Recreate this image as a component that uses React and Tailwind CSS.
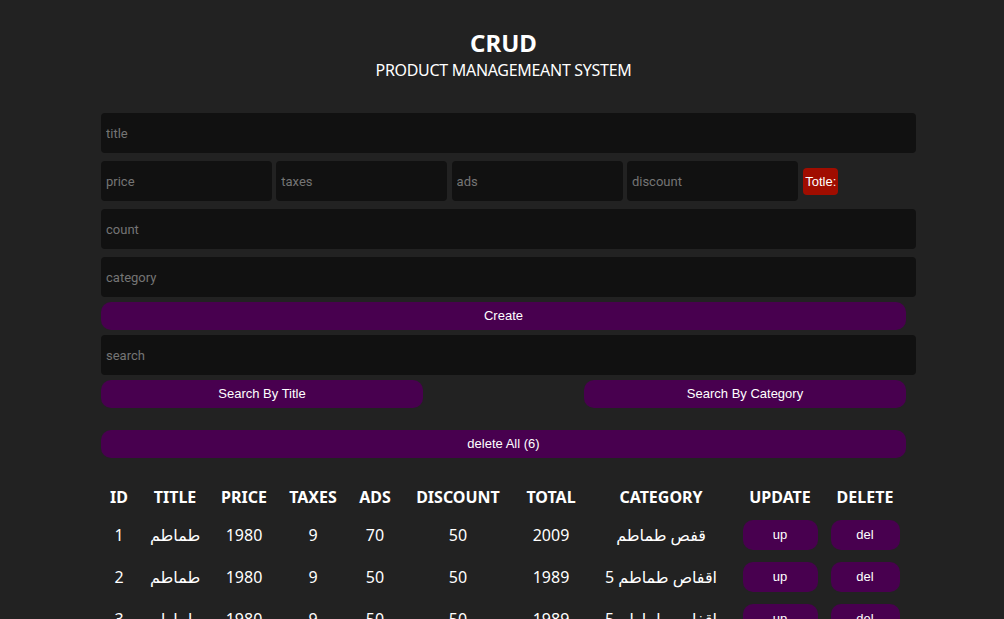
import React from 'react';

const rows = [
  { id: 1, title: 'طماطم', price: 1980, taxes: 9, ads: 70, discount: 50, total: 2009, category: 'قفص طماطم' },
  { id: 2, title: 'طماطم', price: 1980, taxes: 9, ads: 50, discount: 50, total: 1989, category: 'اقفاص طماطم 5' },
  { id: 3, title: 'طماطم', price: 1980, taxes: 9, ads: 50, discount: 50, total: 1989, category: 'اقفاص طماطم 5' },
  { id: 4, title: 'طماطم', price: 1980, taxes: 9, ads: 50, discount: 50, total: 1989, category: 'اقفاص طماطم 5' },
  { id: 5, title: 'طماطم', price: 1980, taxes: 9, ads: 50, discount: 50, total: 1989, category: 'اقفاص طماطم 5' },
  { id: 6, title: 'طماطم', price: 1980, taxes: 9, ads: 50, discount: 50, total: 1989, category: 'اقفاص طماطم 5' },
];

const cols = 'grid grid-cols-[36px_76px_62px_76px_48px_118px_68px_152px_86px_84px] items-center text-center';

function Field({ placeholder, className = 'w-[815px]' }) {
  return (
    <input
      placeholder={placeholder}
      className={`${className} h-10 rounded bg-[#111111] pl-[5px] text-[13px] text-white outline-none placeholder:text-[#757575] font-['Roboto',sans-serif]`}
    />
  );
}

function Btn({ children, className = 'w-[805px]' }) {
  return (
    <button className={`${className} h-7 rounded-[10px] bg-[#48004f] text-[13px] text-white font-['Liberation_Sans',Arial,sans-serif]`}>
      {children}
    </button>
  );
}

export default function App() {
  return (
    <div className="min-h-screen bg-[#222222] text-white font-['Segoe_UI','Noto_Sans','DejaVu_Sans',sans-serif] overflow-hidden">
      <div className="w-[805px] ml-[101px] flex flex-col">
        {/* head */}
        <div className="pt-[27px] text-center">
          <h2 className="text-2xl font-bold leading-8">CRUD</h2>
          <p className="text-base leading-6 -mt-px tracking-[-0.3px]">PRODUCT MANAGEMEANT SYSTEM</p>
        </div>

        {/* inputs */}
        <div className="mt-[31px] flex flex-col gap-2">
          <Field placeholder="title" />
          <div className="flex items-center gap-[4.3px]">
            <Field placeholder="price" className="w-[171px]" />
            <Field placeholder="taxes" className="w-[171px]" />
            <Field placeholder="ads" className="w-[171px]" />
            <Field placeholder="discount" className="w-[171px]" />
            <small className="ml-px h-[27px] px-[2px] rounded bg-[#a00d00] text-[13px] leading-[27px] font-['Liberation_Sans',Arial,sans-serif]">Totle:</small>
          </div>
          <Field placeholder="count" />
          <Field placeholder="category" />
        </div>
        <div className="mt-[5px]">
          <Btn>Create</Btn>
        </div>
        <div className="mt-[5px]">
          <Field placeholder="search" />
        </div>
        <div className="mt-[5px] flex justify-between">
          <Btn className="w-[322px]">Search By Title</Btn>
          <Btn className="w-[322px]">Search By Category</Btn>
        </div>
        <div className="mt-[22px]">
          <Btn>delete All ({rows.length})</Btn>
        </div>

        {/* table */}
        <div className="mt-[21px]">
          <div className={`${cols} h-[35px] font-bold text-base`}>
            <span>ID</span>
            <span>TITLE</span>
            <span>PRICE</span>
            <span>TAXES</span>
            <span>ADS</span>
            <span>DISCOUNT</span>
            <span>TOTAL</span>
            <span>CATEGORY</span>
            <span>UPDATE</span>
            <span>DELETE</span>
          </div>
          {rows.map((r) => (
            <div key={r.id} className={`${cols} h-[42px] text-base`}>
              <span>{r.id}</span>
              <span>{r.title}</span>
              <span>{r.price}</span>
              <span>{r.taxes}</span>
              <span>{r.ads}</span>
              <span>{r.discount}</span>
              <span>{r.total}</span>
              <span>{r.category}</span>
              <span className="flex justify-center">
                <button className="w-[75px] h-[30px] rounded-[10px] bg-[#48004f] text-[13px] font-['Liberation_Sans',Arial,sans-serif]">up</button>
              </span>
              <span className="flex justify-center">
                <button className="w-[69px] h-[30px] rounded-[10px] bg-[#48004f] text-[13px] font-['Liberation_Sans',Arial,sans-serif]">del</button>
              </span>
            </div>
          ))}
        </div>
      </div>
    </div>
  );
}
